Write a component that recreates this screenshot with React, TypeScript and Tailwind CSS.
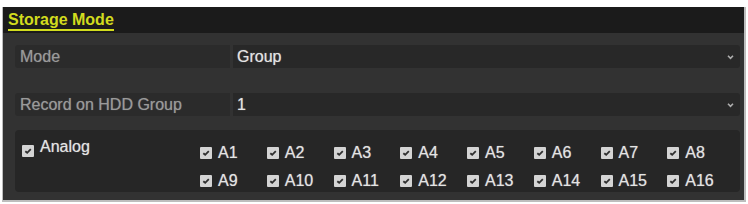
import React from "react";

function Check() {
  return (
    <span className="inline-flex h-[12px] w-[12px] shrink-0 items-center justify-center rounded-[1px] bg-[#d4d4d4]">
      <svg width="10" height="10" viewBox="0 0 10 10">
        <path d="M2.3 5.2 L4.2 6.8 L7.8 3.2" stroke="#2e2e2e" strokeWidth="1.8" fill="none" />
      </svg>
    </span>
  );
}

function Arrow() {
  return (
    <svg width="7" height="6" viewBox="0 0 7 6" className="opacity-80">
      <path d="M1 1.8 L3.5 4.3 L6 1.8" stroke="#cfcfcf" strokeWidth="1.6" fill="none" />
    </svg>
  );
}

function Row({ label, value }: { label: string; value: string }) {
  return (
    <div className="flex h-[23px] gap-[3px]">
      <div className="flex w-[215px] items-center rounded-l-[3px] bg-[#2b2b2b] pl-[5px] text-[16px] text-[#9a9a9a] [text-shadow:0_0_1px_rgba(160,160,160,0.6)]">
        {label}
      </div>
      <div className="flex flex-1 items-center justify-between rounded-r-[3px] bg-[#282828] pl-[4px] pr-[6px] text-[16px] text-[#e4e4e4] [text-shadow:0_0_1px_rgba(230,230,230,0.6)]">
        <span>{value}</span>
        <Arrow />
      </div>
    </div>
  );
}

export default function App() {
  const chans = Array.from({ length: 16 }, (_, i) => `A${i + 1}`);
  return (
    <div
      className="h-[204px] w-[748px] bg-white pt-[7px] pl-[2px]"
      style={{ fontFamily: '"Liberation Sans", Arial, sans-serif' }}
    >
      <div className="flex h-[195px] w-[744px] flex-col border-l-[1px] border-r-[2px] border-b-[2px] border-[#bdbdbd]">
        <div className="flex h-[26px] shrink-0 items-center bg-[#1b1b1b] pl-[5px]">
          <span className="border-b-[2px] border-[#d2dc1e] pt-[1px] text-[16px] font-bold leading-[18px] text-[#d2dc1e]">
            Storage Mode
          </span>
        </div>
        <div className="flex flex-1 flex-col bg-[#323232] pl-[12px] pr-[4px] pt-[12px]">
          <Row label="Mode" value="Group" />
          <div className="h-[25px] shrink-0" />
          <Row label="Record on HDD Group" value="1" />
          <div className="mt-[14px] flex h-[62px] shrink-0 rounded-[4px] bg-[#262626] text-[#e4e4e4] [text-shadow:0_0_1px_rgba(230,230,230,0.6)]">
            <div className="flex w-[185px] items-start gap-[6px] pl-[7px] pt-[8px] text-[16px] leading-[18px]">
              <span className="mt-[7px] flex">
                <Check />
              </span>
              <span>Analog</span>
            </div>
            <div className="grid w-[534px] grid-cols-8 gap-y-[6px] pt-[12px]">
              {chans.map((c) => (
                <div key={c} className="flex items-center gap-[6px] text-[16px] leading-[18px]">
                  <Check />
                  <span>{c}</span>
                </div>
              ))}
            </div>
          </div>
        </div>
      </div>
    </div>
  );
}
